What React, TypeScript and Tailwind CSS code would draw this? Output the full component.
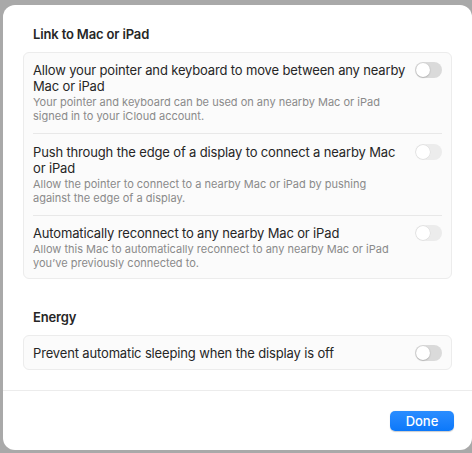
import React from 'react';

interface ToggleProps {
  disabled?: boolean;
}

const Toggle: React.FC<ToggleProps> = ({ disabled }) => (
  <div
    className={`relative h-[16px] w-[27px] shrink-0 rounded-full ${
      disabled ? 'bg-[#ececec]' : 'bg-[#dadada]'
    }`}
  >
    <div
      className={`absolute left-[1px] top-[1px] h-[14px] w-[14px] rounded-full bg-white ${
        disabled ? 'shadow-[0_0_0_0.5px_rgba(0,0,0,0.08)]' : 'shadow-[0_0.5px_1.5px_rgba(0,0,0,0.3)]'
      }`}
    />
  </div>
);

interface RowProps {
  title: string;
  subtitle?: string;
  disabled?: boolean;
}

const SettingRow: React.FC<RowProps> = ({ title, subtitle, disabled }) => (
  <div className="flex items-start justify-between gap-[4px]">
    <div className="min-w-0">
      <div className="text-[13px] leading-[16px] tracking-[-0.15px] text-[#262626]">{title}</div>
      {subtitle && (
        <div className="mt-[1px] pr-[8px] text-[11px] leading-[14px] text-[#8a8a8a]">{subtitle}</div>
      )}
    </div>
    <Toggle disabled={disabled} />
  </div>
);

export default function App() {
  return (
    <div
      className="h-[453px] w-[472px] overflow-hidden bg-[#a9a9a9] pl-[3px] pt-[5px]"
      style={{ fontFamily: 'Inter, "Noto Sans", sans-serif' }}
    >
      <div className="flex h-[445px] w-[469px] flex-col rounded-[12px] bg-white">
        <div className="px-[20px] pt-[21px]">
          <h2 className="px-[10px] text-[13px] font-semibold leading-[16px] tracking-[-0.15px] text-[#262626]">
            Link to Mac or iPad
          </h2>
          <div className="mt-[10px] rounded-[6px] border border-[#ececec] bg-[#fbfbfb] px-[9px]">
            <div className="pb-[10px] pt-[9px]">
              <SettingRow
                title="Allow your pointer and keyboard to move between any nearby Mac or iPad"
                subtitle="Your pointer and keyboard can be used on any nearby Mac or iPad signed in to your iCloud account."
              />
            </div>
            <div className="h-px bg-[#e8e8e8]" />
            <div className="pb-[10px] pt-[10px]">
              <SettingRow
                title="Push through the edge of a display to connect a nearby Mac or iPad"
                subtitle="Allow the pointer to connect to a nearby Mac or iPad by pushing against the edge of a display."
                disabled
              />
            </div>
            <div className="h-px bg-[#e8e8e8]" />
            <div className="pb-[8px] pt-[9px]">
              <SettingRow
                title="Automatically reconnect to any nearby Mac or iPad"
                subtitle="Allow this Mac to automatically reconnect to any nearby Mac or iPad you’ve previously connected to."
                disabled
              />
            </div>
          </div>

          <h2 className="mt-[30px] px-[10px] text-[13px] font-semibold leading-[16px] tracking-[-0.15px] text-[#262626]">
            Energy
          </h2>
          <div className="mt-[10px] flex h-[35px] items-center justify-between rounded-[6px] border border-[#ececec] bg-[#fbfbfb] px-[9px]">
            <span className="text-[13px] leading-[16px] tracking-[-0.15px] text-[#262626]">
              Prevent automatic sleeping when the display is off
            </span>
            <Toggle />
          </div>
        </div>

        <div className="mt-auto border-t border-[#ececec] px-[18px] pb-[19px] pt-[20px]">
          <div className="flex justify-end">
            <button className="h-[20px] w-[64px] rounded-[5px] bg-gradient-to-b from-[#2a8dff] to-[#0a78fa] text-[13px] font-medium leading-[20px] text-white shadow-[0_0.5px_1px_rgba(0,0,0,0.2)]">
              Done
            </button>
          </div>
        </div>
      </div>
    </div>
  );
}
